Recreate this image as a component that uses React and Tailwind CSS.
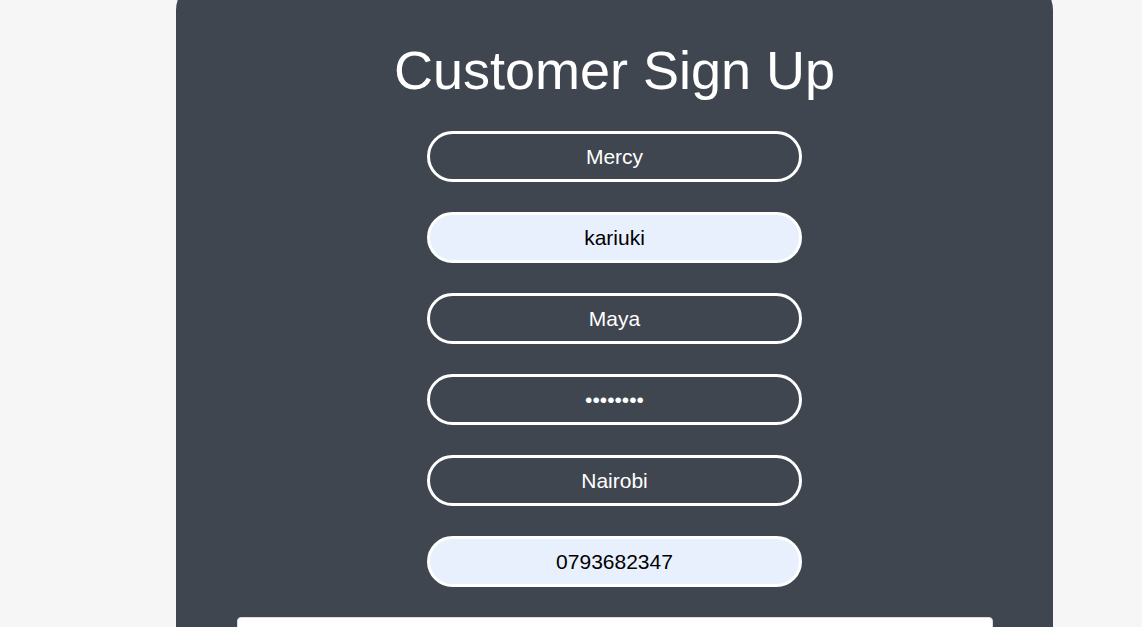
const fields = [
  { value: "Mercy", filled: false },
  { value: "kariuki", filled: true },
  { value: "Maya", filled: false },
  { value: "secret12", filled: false, type: "password" },
  { value: "Nairobi", filled: false },
  { value: "0793682347", filled: true },
];

export default function App() {
  return (
    <div className="min-h-screen h-[627px] overflow-hidden bg-[#f6f6f6] font-['Liberation_Sans',Arial,sans-serif]">
      <div className="mt-[-20px] ml-[176px] w-[877px] rounded-[30px] bg-[#40464f] pt-[63px] pb-10 flex flex-col items-center">
        <h1 className="text-[54px] leading-none text-white">Customer Sign Up</h1>
        <form className="mt-[34px] flex flex-col items-center gap-[30px] w-full">
          {fields.map((f, i) => (
            <input
              key={i}
              type={f.type || "text"}
              readOnly
              value={f.value}
              className={
                f.filled
                  ? "w-[375px] h-[51px] rounded-full border-[3px] border-white bg-[#e8f0fe] text-center text-[21px] text-black outline-none"
                  : "w-[375px] h-[51px] rounded-full border-[3px] border-white bg-transparent text-center text-[21px] text-white outline-none"
              }
            />
          ))}
          <button
            type="button"
            className="w-[756px] h-[50px] rounded-[4px] border border-[#dcdcdc] bg-white"
          ></button>
        </form>
      </div>
    </div>
  );
}
